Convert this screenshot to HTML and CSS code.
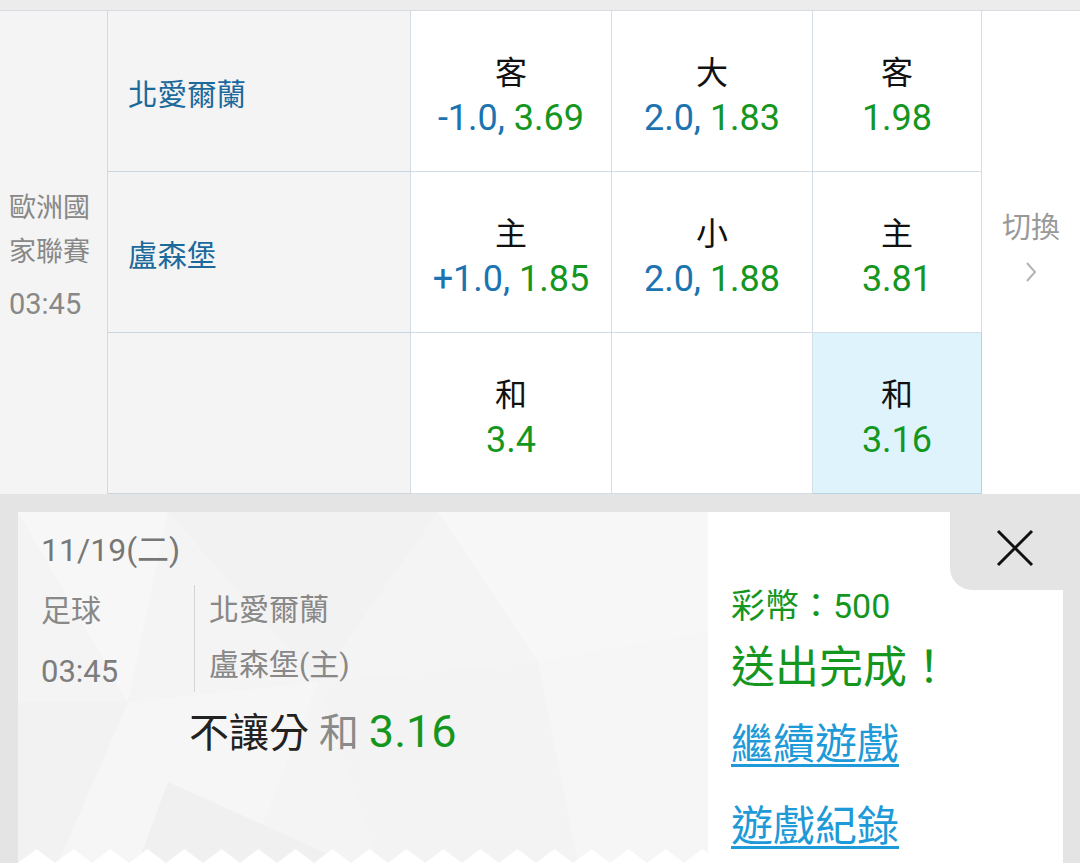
FILE: index.html
```html
<!DOCTYPE html>
<html lang="zh-Hant">
<head>
    <meta charset="UTF-8">
    <meta name="viewport" content="width=device-width, initial-scale=1.0">
    <title>投注確認</title>
    <link rel="stylesheet" href="styles.css">
</head>
<body>
    <div class="topbar"></div>

    <section class="board">
        <div class="league">
            <p>歐洲國</p>
            <p>家聯賽</p>
            <p class="kick">03:45</p>
        </div>

        <div class="team">北愛爾蘭</div>
        <div class="odd">
            <span class="lbl">客</span>
            <span class="num"><span class="hdp">-1.0,</span> <span class="val">3.69</span></span>
        </div>
        <div class="odd">
            <span class="lbl">大</span>
            <span class="num"><span class="hdp">2.0,</span> <span class="val">1.83</span></span>
        </div>
        <div class="odd">
            <span class="lbl">客</span>
            <span class="num"><span class="val">1.98</span></span>
        </div>

        <div class="switch">
            <span>切換</span>
            <svg width="12" height="22" viewBox="0 0 12 22"><path d="M2 2 L10 11 L2 20" fill="none" stroke="#b3b3b3" stroke-width="2"/></svg>
        </div>

        <div class="team">盧森堡</div>
        <div class="odd">
            <span class="lbl">主</span>
            <span class="num"><span class="hdp">+1.0,</span> <span class="val">1.85</span></span>
        </div>
        <div class="odd">
            <span class="lbl">小</span>
            <span class="num"><span class="hdp">2.0,</span> <span class="val">1.88</span></span>
        </div>
        <div class="odd">
            <span class="lbl">主</span>
            <span class="num"><span class="val">3.81</span></span>
        </div>

        <div class="team"></div>
        <div class="odd">
            <span class="lbl">和</span>
            <span class="num"><span class="val">3.4</span></span>
        </div>
        <div class="odd"></div>
        <div class="odd picked">
            <span class="lbl">和</span>
            <span class="num"><span class="val">3.16</span></span>
        </div>
    </section>

    <section class="tray">
        <div class="ticket">
            <svg class="facets" width="690" height="351" viewBox="0 0 690 351">
                <polygon points="0,0 150,0 110,190" fill="#f7f7f7"/>
                <polygon points="150,0 420,0 300,170" fill="#f2f2f2"/>
                <polygon points="110,190 300,170 230,351 40,351" fill="#f6f6f6"/>
                <polygon points="150,270 330,351 120,351" fill="#f0f0f0"/>
                <polygon points="420,0 690,0 690,120 520,150" fill="#f7f7f7"/>
                <polygon points="300,170 520,150 560,351 360,351" fill="#f3f3f3"/>
                <polygon points="520,150 690,120 690,351 560,351" fill="#f6f6f6"/>
                <polygon points="0,190 110,190 40,351 0,351" fill="#f2f2f2"/>
            </svg>
            <div class="ticket-body">
                <p class="date">11/19(二)</p>
                <div class="match">
                    <div class="sport">
                        <p>足球</p>
                        <p class="time">03:45</p>
                    </div>
                    <div class="teams">
                        <p>北愛爾蘭</p>
                        <p class="home">盧森堡(主)</p>
                    </div>
                </div>
                <p class="pick">不讓分 <span class="side">和</span> <span class="price">3.16</span></p>
            </div>
            <svg class="teeth" width="690" height="14">
                <defs>
                    <pattern id="tooth" width="37" height="14" patternUnits="userSpaceOnUse">
                        <path d="M0 14 L18.5 0 L37 14 Z" fill="#ffffff"/>
                    </pattern>
                </defs>
                <rect width="690" height="14" fill="url(#tooth)"/>
            </svg>
        </div>

        <div class="result">
            <button class="close" aria-label="關閉">
                <svg width="38" height="38" viewBox="0 0 38 38"><path d="M2 2 L36 36 M36 2 L2 36" stroke="#111" stroke-width="3"/></svg>
            </button>
            <p class="coins">彩幣：500</p>
            <p class="done">送出完成！</p>
            <a href="#" class="link first">繼續遊戲</a>
            <a href="#" class="link">遊戲紀錄</a>
        </div>
    </section>
</body>
</html>
```

FILE: styles.css
```css
* {
    margin: 0;
    padding: 0;
    box-sizing: border-box;
}

html, body {
    height: 863px;
    overflow: hidden;
}

body {
    font-family: Roboto, "Noto Sans CJK TC", sans-serif;
    background: #e4e4e4;
    color: #111;
}

/* Top strip */
.topbar {
    height: 11px;
    background: #ececec;
    border-bottom: 1px solid #d6dce1;
}

/* Odds board */
.board {
    display: grid;
    grid-template-columns: 108px 303px 201px 201px 169px 98px;
    grid-template-rows: repeat(3, 161px);
    background: #fff;
}

.league {
    grid-row: 1 / 4;
    grid-column: 1;
    background: #f4f4f4;
    border-right: 1px solid #d3d9de;
    display: flex;
    flex-direction: column;
    justify-content: center;
    padding-left: 9px;
    padding-top: 6px;
    color: #888;
    font-size: 27px;
    line-height: 44px;
}

.league .kick {
    font-size: 29px;
    margin-top: 8px;
}

.team {
    background: #f4f4f4;
    border-right: 1px solid #d3dce3;
    border-bottom: 1px solid #c9d6e0;
    display: flex;
    align-items: center;
    padding: 2px 0 0 20px;
    color: #1c6a9c;
    font-size: 29.5px;
}

.odd {
    border-right: 1px solid #d6dde2;
    border-bottom: 1px solid #d3dde5;
    display: flex;
    flex-direction: column;
    align-items: center;
    justify-content: center;
    padding-top: 10px;
}

.odd .lbl {
    font-size: 32px;
    line-height: 44px;
    color: #111;
}

.odd .num {
    font-size: 36px;
    line-height: 46px;
}

.hdp {
    color: #1b74b0;
}

.val {
    color: #15961f;
}

.odd.picked {
    background: #dff3fd;
    border: 1px solid #b9d2e0;
    border-top: none;
    border-left: none;
}

.switch {
    grid-row: 1 / 4;
    grid-column: 6;
    display: flex;
    flex-direction: column;
    align-items: center;
    justify-content: center;
    gap: 13px;
    padding-bottom: 14px;
    color: #999;
    font-size: 29px;
    line-height: 40px;
}

/* Confirmation tray */
.tray {
    display: flex;
    padding: 18px 17px 0 18px;
    height: 369px;
}

.ticket {
    position: relative;
    width: 690px;
    height: 351px;
    background: #f4f4f4;
    overflow: hidden;
}

.facets {
    position: absolute;
    top: 0;
    left: 0;
}

.teeth {
    position: absolute;
    left: 0;
    bottom: 0;
}

.ticket-body {
    position: relative;
    padding: 18px 0 0 23px;
}

.date {
    font-size: 32px;
    line-height: 40px;
    color: #777;
}

.match {
    display: flex;
    margin-top: 15px;
    color: #888;
}

.sport {
    width: 153px;
    font-size: 30px;
    line-height: 52px;
    color: #888;
}

.sport .time {
    margin-top: 9px;
    font-size: 31px;
    color: #7d7d7d;
}

.teams {
    height: 107px;
    border-left: 1px solid #d4d4d4;
    padding-left: 14px;
    font-size: 30px;
    line-height: 50px;
}

.teams .home {
    margin-top: 5px;
}

.pick {
    margin: 9px 0 0 148px;
    font-size: 40px;
    line-height: 50px;
    color: #222;
}

.pick .side {
    color: #8a8a8a;
}

.pick .price {
    color: #15961f;
    font-size: 45px;
}

.result {
    position: relative;
    width: 355px;
    height: 351px;
    background: #fff;
    padding: 74px 0 0 23px;
    display: flex;
    flex-direction: column;
    align-items: flex-start;
}

.close {
    position: absolute;
    top: 0;
    right: 0;
    width: 113px;
    height: 78px;
    border: none;
    background: #e4e4e4;
    border-bottom-left-radius: 22px;
    display: flex;
    align-items: center;
    justify-content: center;
    padding-left: 16px;
    padding-bottom: 6px;
}

.coins {
    font-size: 34px;
    line-height: 40px;
    color: #15961f;
}

.done {
    margin-top: 14px;
    font-size: 44px;
    line-height: 56px;
    color: #15961f;
}

.link {
    font-size: 42px;
    line-height: 56px;
    color: #1e9ad8;
    text-decoration: underline;
    text-decoration-thickness: 3px;
    text-underline-offset: 5px;
    margin-top: 26px;
}

.link.first {
    margin-top: 21px;
}
```
